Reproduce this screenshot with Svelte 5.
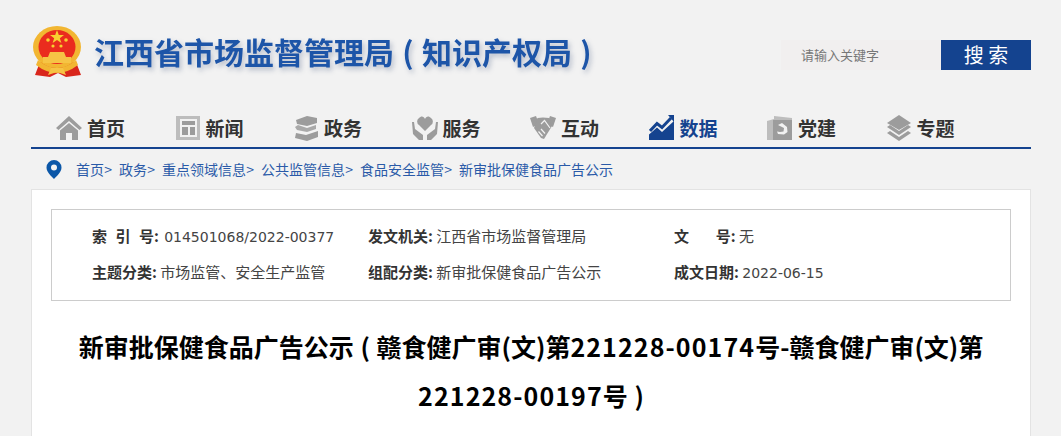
<script>
	const nav = [
		{ name: '首页', icon: 'home' },
		{ name: '新闻', icon: 'news' },
		{ name: '政务', icon: 'books' },
		{ name: '服务', icon: 'care' },
		{ name: '互动', icon: 'hands' },
		{ name: '数据', icon: 'chart', active: true },
		{ name: '党建', icon: 'party' },
		{ name: '专题', icon: 'layers' }
	];
	const crumbs = ['首页', '政务', '重点领域信息', '公共监管信息', '食品安全监管'];
	const meta = [
		['索\u2002\u200a引\u2002\u200a号', '014501068/2022-00377', true],
		['发文机关', '江西省市场监督管理局'],
		['文\u3000\u2002\u00a0\u200a号', '无'],
		['主题分类', '市场监管、安全生产监管'],
		['组配分类', '新审批保健食品广告公示'],
		['成文日期', '2022-06-15']
	];
</script>

<div class="page">
	<header>
		<svg class="emblem" viewBox="0 0 50 52" width="50" height="52">
			<path d="M7 36 L2 49 L17 51 L25 47 L33 51 L48 49 L43 36 Z" fill="#d9261c" />
			<ellipse cx="24" cy="21" rx="24" ry="21" fill="#f2b632" />
			<ellipse cx="24" cy="21" rx="18.5" ry="17" fill="#ea2c1e" />
			<path d="M24 4 L25.8 9 L31 9 L26.8 12.2 L28.4 17 L24 14 L19.6 17 L21.2 12.2 L17 9 L22.2 9 Z" fill="#f8d030" />
			<circle cx="15" cy="14" r="1.8" fill="#f8d030" />
			<circle cx="33" cy="14" r="1.8" fill="#f8d030" />
			<circle cx="20" cy="20" r="1.6" fill="#f8d030" />
			<circle cx="28" cy="20" r="1.6" fill="#f8d030" />
			<path d="M17 26 H31 L33 31 H38 V37 H10 V31 H15 Z" fill="#f6c445" />
			<path d="M5 34 Q24 50 43 34 L45 39 Q24 55 3 39 Z" fill="#f2b632" />
			<path d="M18 42 H30 L33 49 L24 46 L15 49 Z" fill="#f6c445" />
		</svg>
		<h1>江西省市场监督管理局 ( 知识产权局 )</h1>
		<div class="search">
			<div class="input">请输入关键字</div>
			<div class="btn">搜 索</div>
		</div>
	</header>

	<nav>
		{#each nav as item}
			<div class="item" class:active={item.active}>
				<svg viewBox="0 0 26 26" width="26" height="26">
					{#if item.icon === 'home'}
						<path d="M13 1 L26 13 L23.5 15 L13 6 L2.5 15 L0 13 Z" />
						<path d="M4 15.5 L13 8 L22 15.5 V25 H16 V18 H10 V25 H4 Z" />
					{:else if item.icon === 'news'}
						<path fill="#bdbdbd" fill-rule="evenodd" d="M1 1 H25 V25 H1 Z M5 4 V22 H22 V4 Z" />
						<path d="M7 6 H20 V10 H7 Z M7 12 H13 V20 H7 Z M15 12 H20 V20 H15 Z" />
					{:else if item.icon === 'books'}
						<path d="M3 5 L14 1 L24 3 V8 L14 11 L4 9 Z" />
						<path d="M2 12 L5 10 L14 13 L23 10 V14 L14 17 L4 15 Z" opacity=".85" />
						<path d="M3 18 L13 20 L25 16 V22 L14 26 L2 23 Z" />
					{:else if item.icon === 'care'}
						<path d="M13 16 L7 10 A4.2 4.2 0 0 1 7 3 C9 .5 12 1 13 4 C14 1 17 .5 19 3 A4.2 4.2 0 0 1 19 10 Z" />
						<path d="M0 7 L2 7 L3 14 L11 20 V25 H7 L1 19 Z M26 7 L24 7 L23 14 L15 20 V25 H19 L25 19 Z" />
					{:else if item.icon === 'hands'}
						<path d="M0 3 L6 1 L9 9 L3 12 Z M26 3 L20 1 L17 9 L23 12 Z" />
						<path d="M7.5 3 L13 2.5 L19 3 L22 11 L14 24 L11 23 L4 13 Z" />
						<path d="M11 9 L14.5 5.5 L20 13 M11 14 L15 18.5 M8.5 16.5 L12.5 21" fill="none" stroke="#f2f2f2" stroke-width="1.2" />
					{:else if item.icon === 'chart'}
						<path d="M0 25 V19.5 L8 12.5 L13 17 L25 6 V25 Z" />
						<path d="M1 16 L8 8.5 L13 12.5 L22 3" fill="none" stroke="#14438f" stroke-width="3" />
						<path d="M19 0 H25 V7 Z" />
					{:else if item.icon === 'party'}
						<path d="M0 6 L7 4 V1 L25 3 V5 H7 V25 L0 25 Z" fill="#bdbdbd" />
						<path d="M6 5 H25 V25 H6 Z" />
						<path d="M11 10 L15 8 L20 12 L20.5 17 L17 19.5 L11 19 L10 16.5 L13 17 L16.5 16.5 L17 13 Z" fill="#f2f2f2" />
					{:else}
						<path d="M13 0 L25 8 L13 15 L1 8 Z" />
						<path d="M1 12 L4 10 L13 16 L22 10 L25 12 L13 20 Z" />
						<path d="M1 18 L4 16 L13 22 L22 16 L25 18 L13 26 Z" />
					{/if}
				</svg>
				<span>{item.name}</span>
			</div>
		{/each}
	</nav>

	<div class="crumbs">
		<svg viewBox="0 0 16 19" width="16" height="19">
			<path fill-rule="evenodd" fill="#0b57a8" d="M8 0 A7.5 7.5 0 0 1 15.5 7.5 C15.5 12 11 16 8 19 C5 16 .5 12 .5 7.5 A7.5 7.5 0 0 1 8 0 Z M8 4.5 A3 3 0 1 0 8 10.5 A3 3 0 1 0 8 4.5 Z" />
		</svg>
		{#each crumbs as c}
			<span class="crumb">{c}<i>&gt;</i></span>
		{/each}
		<span class="crumb">新审批保健食品广告公示</span>
	</div>

	<main>
		<div class="meta">
			{#each meta as [label, value, wide]}
				<div class="cell">
					<b>{label}:</b>
					<span class:num={/^\d/.test(value)} class:wide>{value}</span>
				</div>
			{/each}
		</div>
		<h2>新审批保健食品广告公示 ( 赣食健广审(文)第<span class="digits">221228-00174</span>号-赣食健广审(文)第<span class="digits">221228-00197</span>号 )</h2>
	</main>
</div>

<style>
	:global(body) {
		background: #f2f2f2;
		font-family: "Noto Sans CJK SC", "Liberation Sans", sans-serif;
	}
	.page {
		width: 1000px;
		height: 436px;
		margin-left: 31px;
		overflow: hidden;
	}
	header {
		display: flex;
		align-items: center;
		height: 100px;
		padding-bottom: 1px;
		box-sizing: border-box;
	}
	.emblem {
		flex: none;
		margin: 5px 11px 0 2px;
		filter: blur(0.4px);
	}
	h1 {
		margin: 3px 0 0;
		font-size: 30px;
		font-weight: 700;
		color: #1d55a8;
		white-space: nowrap;
		word-spacing: 1.5px;
		text-shadow: 2px 3px 5px rgba(70, 90, 130, 0.35);
		filter: blur(0.3px);
	}
	.search {
		display: flex;
		margin-left: auto;
		height: 30px;
		margin-top: 10px;
	}
	.input {
		width: 140px;
		padding-left: 20px;
		background: #f1efef;
		color: #777;
		font-size: 13px;
		line-height: 30px;
	}
	.btn {
		width: 90px;
		background: #14438f;
		color: #fff;
		font-size: 20px;
		line-height: 30px;
		text-align: center;
	}
	nav {
		display: grid;
		grid-template-columns: repeat(8, 118.5px);
		height: 47px;
		padding-left: 25px;
		border-bottom: 2px solid #14438f;
	}
	.item {
		display: flex;
		align-items: center;
		gap: 5px;
		padding-top: 8px;
		fill: #9c9c9c;
		color: #333;
		font-size: 19px;
		font-weight: 700;
	}
	.item svg {
		flex: none;
		filter: blur(0.3px);
	}
	.item.active {
		fill: #14438f;
		color: #14438f;
	}
	.crumbs {
		display: flex;
		align-items: center;
		height: 40px;
		padding-left: 15px;
		color: #2a5aa8;
		font-size: 14px;
	}
	.crumbs svg {
		margin-right: 14px;
	}
	.crumb {
		margin-right: 7px;
	}
	.crumb i {
		font-style: normal;
		display: inline-block;
		width: 8px;
		text-align: right;
	}
	main {
		background: #fff;
		border: 1px solid #e3e3e3;
		padding: 19px 19px 0;
		box-sizing: border-box;
		height: 300px;
	}
	.meta {
		display: grid;
		grid-template-columns: 276px 306px 1fr;
		grid-auto-rows: 36px;
		align-content: center;
		height: 92px;
		box-sizing: border-box;
		padding: 0 0 2px 40px;
		border: 1px solid #ccc;
		font-size: 15px;
		color: #444;
	}
	.cell {
		line-height: 36px;
		white-space: nowrap;
	}
	.cell b {
		color: #333;
	}
	.num {
		font-family: "DejaVu Sans", sans-serif;
		font-size: 14px;
	}
	.wide {
		margin-left: 2px;
	}
	h2 {
		margin: 21px 0 0;
		font-size: 25px;
		line-height: 49px;
		font-weight: 700;
		color: #000;
		text-align: center;
		word-spacing: 1px;
	}
	.digits {
		letter-spacing: 1.1px;
	}
</style>
